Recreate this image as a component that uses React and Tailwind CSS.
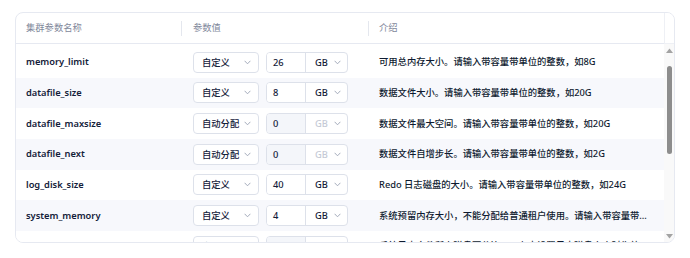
import React from "react";

const rows = [
  { name: "memory_limit", mode: "自定义", value: "26", disabled: false, desc: "可用总内存大小。请输入带容量带单位的整数，如8G" },
  { name: "datafile_size", mode: "自定义", value: "8", disabled: false, desc: "数据文件大小。请输入带容量带单位的整数，如20G" },
  { name: "datafile_maxsize", mode: "自动分配", value: "0", disabled: true, desc: "数据文件最大空间。请输入带容量带单位的整数，如20G" },
  { name: "datafile_next", mode: "自动分配", value: "0", disabled: true, desc: "数据文件自增步长。请输入带容量带单位的整数，如2G" },
  { name: "log_disk_size", mode: "自定义", value: "40", disabled: false, desc: "Redo 日志磁盘的大小。请输入带容量带单位的整数，如24G" },
  { name: "system_memory", mode: "自定义", value: "4", disabled: false, desc: "系统预留内存大小，不能分配给普通租户使用。请输入带容量带单位的整数，如4G" },
  { name: "log_disk_percentage", mode: "自动分配", value: "", disabled: true, desc: "系统日志文件所占磁盘百分比，只有未设置日志磁盘大小时生效" },
];

function Chevron({ color = "#9ba3b4" }) {
  return (
    <svg width="7" height="5" viewBox="0 0 7 5" fill="none">
      <path d="M0.6 0.8 L3.5 3.8 L6.4 0.8" stroke={color} strokeWidth="0.9" />
    </svg>
  );
}

function Row({ r, i }) {
  const stripe = i % 2 === 1;
  return (
    <div className={`h-[30.67px] flex items-center shrink-0 ${stripe ? "bg-[#f7f8fc]" : "bg-white"}`}>
      <div className="w-[165px] pl-[10px] font-semibold text-[#132039] truncate leading-[1.5]">{r.name}</div>
      <div className="w-[187px] pl-[12px] flex items-center gap-[7px]">
        <div className="w-[66px] h-[21px] border border-[#dde1ea] rounded-[4px] bg-white flex items-center justify-between pl-[8px] pr-[7px] text-[#132039] font-medium">
          <span>{r.mode}</span>
          <Chevron />
        </div>
        <div className="w-[82px] h-[21px] border border-[#dde1ea] rounded-[4px] bg-white flex overflow-hidden font-medium">
          <div className={`w-[38px] h-full flex items-center pl-[6px] text-[#132039] ${r.disabled ? "bg-[#f4f6fa]" : "bg-white"}`}>
            {r.value}
          </div>
          <div className="flex-1 border-l border-[#dde1ea] flex items-center pl-[9px] pr-[6px] justify-between">
            <span className={r.disabled ? "text-[#c5cad6]" : "text-[#132039]"}>GB</span>
            <Chevron />
          </div>
        </div>
      </div>
      <div className="flex-1 min-w-0 pl-[11px] pr-[14px] text-[#0f1b30] font-medium truncate leading-[1.5]">{r.desc}</div>
    </div>
  );
}

export default function App() {
  return (
    <div
      className="w-[690px] h-[258px] bg-white pt-[12px] px-[15px] text-[9.3px] leading-none"
      style={{ fontFamily: '"Noto Sans", "Noto Sans CJK SC", sans-serif' }}
    >
      <div className="h-[231px] border border-[#e6e9f1] rounded-[8px] overflow-hidden flex">
        <div className="flex-1 min-w-0 flex flex-col">
          <div className="h-[31px] shrink-0 flex items-center border-b border-[#e6e9f1] text-[#7f889b]">
            <div className="w-[165px] pl-[10px]">集群参数名称</div>
            <div className="w-px h-[15px] bg-[#e4e7ee]" />
            <div className="w-[186px] pl-[11px]">参数值</div>
            <div className="w-px h-[15px] bg-[#e4e7ee]" />
            <div className="flex-1 pl-[10px]">介绍</div>
          </div>
          <div className="pt-[3px] flex flex-col">
            {rows.map((r, i) => (
              <Row key={r.name} r={r} i={i} />
            ))}
          </div>
        </div>
        <div className="w-[10px] shrink-0 flex flex-col">
          <div className="h-[31px] shrink-0 border-l border-b border-[#eef0f5] bg-white" />
          <div className="flex-1 bg-[#f9f9f9] flex flex-col items-center pt-[4px] pb-[3px]">
            <svg width="7" height="5" viewBox="0 0 7 5"><path d="M0 5 L3.5 0.5 L7 5 Z" fill="#a3a3a3" /></svg>
            <div className="mt-[13px] w-[5px] h-[88px] rounded-full bg-[#8d8d8d]" />
            <div className="flex-1" />
            <svg width="7" height="5" viewBox="0 0 7 5"><path d="M0 0 L3.5 4.5 L7 0 Z" fill="#a3a3a3" /></svg>
          </div>
        </div>
      </div>
    </div>
  );
}
